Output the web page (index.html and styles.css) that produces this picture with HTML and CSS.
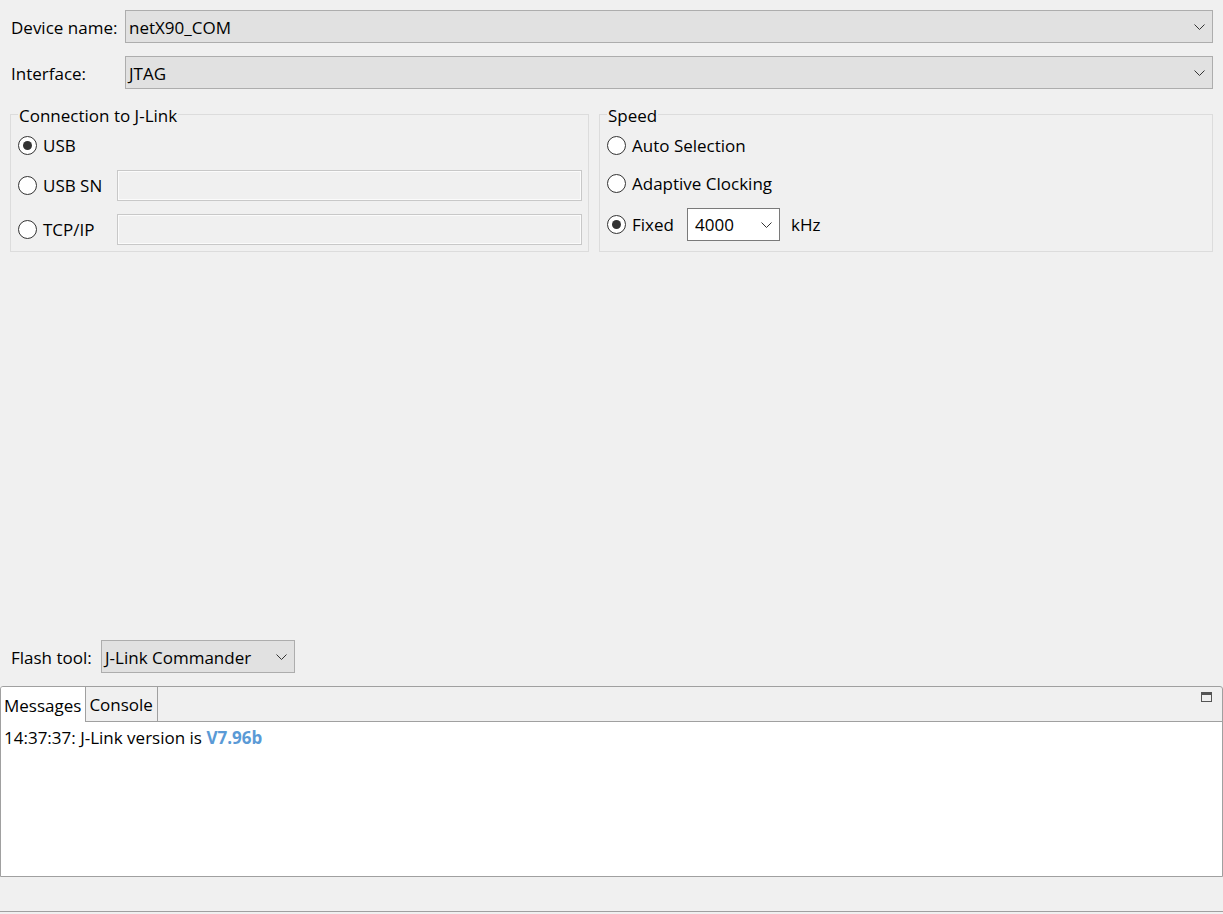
FILE: index.html
```html
<!DOCTYPE html>
<html>
<head>
<meta charset="utf-8">
<link rel="stylesheet" href="styles.css">
</head>
<body>
<div class="top">
  <div class="field-row">
    <span class="row-label">Device name:</span>
    <div class="combo combo-wide"><span>netX90_COM</span><svg class="chev" width="11" height="6" viewBox="0 0 11 6"><polyline points="0.5,0.5 5.5,5.5 10.5,0.5" /></svg></div>
  </div>
  <div class="field-row second">
    <span class="row-label">Interface:</span>
    <div class="combo combo-wide"><span>JTAG</span><svg class="chev" width="11" height="6" viewBox="0 0 11 6"><polyline points="0.5,0.5 5.5,5.5 10.5,0.5" /></svg></div>
  </div>
  <div class="groups">
    <fieldset class="group group-conn">
      <legend>Connection to J-Link</legend>
      <div class="opt opt-1"><span class="radio checked"></span><span class="opt-label">USB</span></div>
      <div class="opt opt-2"><span class="radio"></span><span class="opt-label w-conn">USB SN</span><div class="textbox"></div></div>
      <div class="opt opt-3"><span class="radio"></span><span class="opt-label w-conn">TCP/IP</span><div class="textbox"></div></div>
    </fieldset>
    <fieldset class="group group-speed">
      <legend>Speed</legend>
      <div class="opt s-1"><span class="radio"></span><span class="opt-label">Auto Selection</span></div>
      <div class="opt s-2"><span class="radio"></span><span class="opt-label">Adaptive Clocking</span></div>
      <div class="opt s-3"><span class="radio checked"></span><span class="opt-label w-fixed">Fixed</span>
        <div class="select"><span>4000</span><svg class="chev" width="11" height="6" viewBox="0 0 11 6"><polyline points="0.5,0.5 5.5,5.5 10.5,0.5" /></svg></div>
        <span class="unit">kHz</span>
      </div>
    </fieldset>
  </div>
</div>
<div class="spacer"></div>
<div class="flash-row">
  <span class="flash-label">Flash tool:</span>
  <div class="combo combo-flash"><span>J-Link Commander</span><svg class="chev" width="11" height="6" viewBox="0 0 11 6"><polyline points="0.5,0.5 5.5,5.5 10.5,0.5" /></svg></div>
</div>
<div class="panel">
  <div class="tabstrip">
    <div class="tab active">Messages</div>
    <div class="tab">Console</div>
    <div class="tab-fill"></div>
    <svg class="restore" width="11" height="10" viewBox="0 0 11 10"><rect x="0.5" y="0.5" width="10" height="9" fill="none" stroke="#555"/><line x1="0" y1="2" x2="11" y2="2" stroke="#555" stroke-width="2"/></svg>
  </div>
  <div class="content">
    <div class="msg">14:37:37: J-Link version is <b class="ver">V7.96b</b></div>
  </div>
</div>
<div class="status"></div>
</body>
</html>
```
FILE: styles.css
```css
html, body {
  margin: 0;
  padding: 0;
}
body {
  width: 1223px;
  height: 914px;
  background: #f0f0f0;
  font-family: "Open Sans", "Noto Sans", "Liberation Sans", sans-serif;
  font-size: 17px;
  color: #000;
  display: flex;
  flex-direction: column;
  box-sizing: border-box;
  padding-bottom: 2px;
  overflow: hidden;
}
* { box-sizing: border-box; }

.top {
  padding: 10px 10px 0 10px;
}
.field-row {
  display: flex;
  align-items: center;
  height: 33px;
}
.field-row.second { margin-top: 13px; }
.row-label {
  width: 115px;
  padding-left: 1px;
  padding-top: 1px;
}
.combo {
  height: 33px;
  background: #e1e1e1;
  border: 1px solid #adadad;
  display: flex;
  align-items: center;
  justify-content: space-between;
  padding: 1px 7px 0 3px;
}
.combo-wide { flex: 1; }
.chev polyline {
  fill: none;
  stroke: #333;
  stroke-width: 1;
}

.groups {
  display: flex;
  gap: 10px;
  margin-top: 13px;
}
.group {
  margin: 0;
  border: 1px solid #dcdcdc;
  padding: 4px 6px 6px 7px;
  min-width: 0;
}
.group legend {
  padding: 4px 1px 0 1px;
  line-height: 20px;
}
.group-conn { width: 579px; flex: none; }
.group-speed { flex: 1; }

.opt {
  display: flex;
  align-items: center;
}
.opt-1 { height: 30px; }
.opt-2 { height: 31px; margin-top: 10px; }
.opt-3 { height: 31px; margin-top: 13px; }
.s-1 { height: 30px; }
.s-2 { height: 30px; margin-top: 8px; }
.s-3 { height: 33px; margin-top: 10px; }

.radio {
  width: 19px;
  height: 19px;
  border: 1px solid #333;
  border-radius: 50%;
  background: #fff;
  flex: none;
  display: flex;
  align-items: center;
  justify-content: center;
  margin-right: 6px;
}
.radio.checked::after {
  content: "";
  width: 9px;
  height: 9px;
  border-radius: 50%;
  background: #333;
}
.w-conn { width: 74px; flex: none; }
.w-fixed { width: 55px; flex: none; }
.textbox {
  flex: 1;
  height: 31px;
  border: 1px solid #c8c8c8;
  box-shadow: inset 0 0 0 1px #fbfbfb;
  background: #f0f0f0;
}
.select {
  width: 93px;
  height: 33px;
  background: #fff;
  border: 1px solid #7a7a7a;
  display: flex;
  align-items: center;
  justify-content: space-between;
  padding: 0 7px 0 7px;
}
.unit { margin-left: 11px; }

.spacer { flex: 1; }

.flash-row {
  display: flex;
  align-items: center;
  height: 33px;
  padding-left: 11px;
}
.flash-label { width: 90px; padding-top: 1px; }
.combo-flash { width: 194px; }

.panel {
  margin-top: 13px;
  border: 1px solid #a0a0a0;
  border-radius: 3px 3px 0 0;
  background: #f0f0f0;
}
.tabstrip {
  display: flex;
  align-items: stretch;
  height: 35px;
  border-bottom: 1px solid #a0a0a0;
}
.tab {
  padding: 1px 4px 0 3px;
  display: flex;
  align-items: center;
  border-right: 1px solid #a0a0a0;
}
.tab.active {
  background: #fff;
  margin-bottom: -1px;
  border-top-left-radius: 2px;
}
.tab-fill { flex: 1; }
.restore {
  margin: 5px 10px 0 0;
}
.content {
  height: 154px;
  background: #fff;
  padding: 4px 3px;
}
.msg { line-height: 24px; }
.ver {
  color: #5a9ad6;
  font-weight: 700;
}

.status {
  height: 35px;
  border-bottom: 1px solid #a0a0a0;
}
```
